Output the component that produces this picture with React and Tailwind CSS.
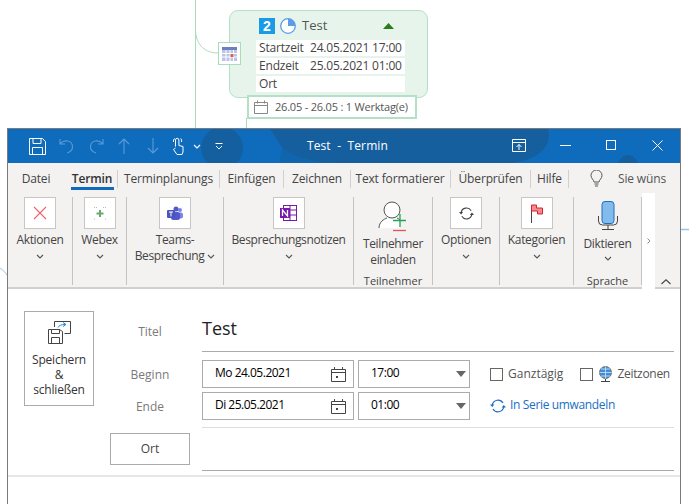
import React from "react";

const Chev = ({ className = "" }) => (
  <svg width="8" height="5" viewBox="0 0 8 5" className={className} fill="none" stroke="#555" strokeWidth="1.1"><path d="M1 1l3 3 3-3" /></svg>
);
const Sep = () => <div className="w-px h-[88px] mt-[7px] bg-[#c4c4c4] shrink-0" />;
const TabSep = () => <div className="w-px h-[18px] bg-[#d0d0d0] shrink-0" />;
const Box = ({ children }) => (
  <div className="w-[32px] h-[32px] bg-white border border-[#c6c6c6] flex items-center justify-center shrink-0">{children}</div>
);

function RibbonButton({ w, icon, lines, chevInline, chev = true }) {
  return (
    <div className={`${w} shrink-0 flex flex-col items-center pt-[7px] text-[12px] leading-[16px] text-[#444] tracking-[-0.35px]`}>
      <Box>{icon}</Box>
      <div className="mt-[3px] text-center whitespace-nowrap">{lines[0]}</div>
      {lines[1] && (
        <div className="text-center whitespace-nowrap flex items-center gap-[3px]">
          {lines[1]}
          {chevInline && <Chev />}
        </div>
      )}
      {chev && !chevInline && <Chev className="mt-[6px]" />}
    </div>
  );
}

const CalIcon = () => (
  <svg width="15" height="16" viewBox="0 0 15 16" fill="none" stroke="#444" strokeWidth="1"><path d="M.5 3.500h14v12H.5zM.5 6.500h14M3.500 1v3M11.500 1v3" /><rect x="5" y="10" width="2" height="2" fill="#444" stroke="none" /></svg>
);

const Arrow = () => (
  <svg width="10" height="6" viewBox="0 0 10 6"><path d="M0 0h10L5 6z" fill="#666" /></svg>
);

const Sync = ({ size, color }) => (
  <svg width={size} height={size} viewBox="0 0 16 16" fill="none" stroke={color} strokeWidth="1.2">
    <path d="M2.300 7A5.800 5.800 0 0 1 13 5" />
    <path d="M13.700 9A5.800 5.800 0 0 1 3 11" />
    <path d="M0 6.500h4.400L2.200 9zM16 9.500h-4.400L13.800 7z" fill={color} stroke="none" />
  </svg>
);

export default function App() {
  return (
    <div className="relative w-[689px] h-[504px] overflow-hidden bg-white text-[12px] text-[#444]" style={{ fontFamily: '"Open Sans","Noto Sans",sans-serif' }}>
      {/* mind-map canvas */}
      <svg className="absolute left-0 top-0" width="689" height="504" fill="none">
        <path d="M195.500 0V128M195.500 30C196 46 206 53 218 53M246.500 118V128" stroke="#a8dcbd" strokeWidth="1" />
        <path d="M680 229.500H689" stroke="#9dc3e6" strokeWidth="1.500" />
        <path d="M0 268C3 270 5 272 7 275" stroke="#9dc3e6" strokeWidth="1" />
      </svg>
      <div className="absolute left-[229px] top-[10px] w-[199px] h-[88px] rounded-[9px] bg-[#e6f4ec] border border-[#b5e0c8]">
        <div className="flex items-center h-[29px] pl-[29px] pt-[1px]">
          <div className="w-[16px] h-[16px] bg-[#1b9ae8] text-white text-[14px] font-bold leading-[16px] text-center" style={{ fontFamily: '"Liberation Sans",sans-serif' }}>2</div>
          <svg className="ml-[5px]" width="16" height="16" viewBox="0 0 16 16"><circle cx="8" cy="8" r="7.300" fill="#fff" stroke="#5b9bea" strokeWidth="1.300" /><path d="M8 8V.7A7.300 7.300 0 0 1 15.300 8z" fill="#5b9bea" /></svg>
          <span className="ml-[6px] text-[13px] text-[#555]">Test</span>
          <svg className="ml-[56px]" width="11" height="6" viewBox="0 0 11 6"><path d="M0 6L5.500 0 11 6z" fill="#2a7d1a" /></svg>
        </div>
        {[
          ["Startzeit", "24.05.2021 17:00"],
          ["Endzeit", "25.05.2021 01:00"],
          ["Ort", ""],
        ].map(([a, b]) => (
          <div key={a} className="ml-[26px] mb-[2px] w-[149px] h-[16px] bg-white flex text-[12px] leading-[16px] text-[#444] pl-[3px] whitespace-nowrap tracking-[-0.2px]">
            <span className="w-[51px]">{a}</span>
            <span>{b}</span>
          </div>
        ))}
      </div>
      <div className="absolute left-[218px] top-[42px] w-[23px] h-[23px] bg-white border border-[#a8dcbd] flex items-center justify-center">
        <svg width="15" height="14" viewBox="0 0 15 14"><rect width="15" height="14" fill="#b9c4e6" /><rect y="0" width="15" height="3" fill="#6e7fc0" /><path d="M0 6.500h15M0 10h15M4 3v11M8 3v11M11.500 3v11" stroke="#fff" strokeWidth="1" /><rect x="8.500" y="7" width="3" height="3" fill="#e06050" /></svg>
      </div>
      <div className="absolute left-[247px] top-[95px] w-[170px] h-[24px] bg-white border-2 border-[#b5e0c8] flex items-center pl-[5px] text-[11px] text-[#555] whitespace-nowrap">
        <svg width="14" height="14" viewBox="0 0 14 14" fill="none" stroke="#888"><path d="M.5 2.500h13v11H.5zM.5 5.500h13M3.500 .5v3M10.500 .5v3" /></svg>
        <span className="ml-[7px] tracking-[-0.2px]">26.05 - 26.05 : 1 Werktag(e)</span>
      </div>

      {/* Outlook window */}
      <div className="absolute left-[7px] top-[128px] w-[674px] h-[380px] border border-[#7a7a7a] bg-white">
        {/* title bar */}
        <div className="relative h-[34px] overflow-hidden flex items-center bg-[#0f6cbd] text-white">
          <svg className="absolute left-0 top-0" width="672" height="34">
            <circle cx="214" cy="19" r="21" fill="#145f9f" />
            <circle cx="296" cy="30" r="24" fill="#125f9f" opacity=".5" />
            <path d="M262 0H540C545 18 530 30 505 34H330C310 34 290 30 275 20z" fill="#165f9f" />
            <circle cx="620" cy="36" r="10" fill="#145f9f" />
          </svg>
          <svg className="relative ml-[21px]" width="17" height="17" viewBox="0 0 17 17" fill="none" stroke="#fff" strokeWidth="1"><path d="M.5.5h13l3 3v13H.5zM4 .5v5h8v-5M3.500 16.500v-7h10v7" /></svg>
          <svg className="relative ml-[13px]" width="16" height="16" viewBox="0 0 16 16" fill="none" stroke="#5a9bd6" strokeWidth="1.100"><path d="M1 1v5h5M1.500 5.500C5 1.500 13 2 13.500 8.500 13.800 12 11 14 8 15" /></svg>
          <svg className="relative ml-[13px]" width="16" height="16" viewBox="0 0 16 16" fill="none" stroke="#5a9bd6" strokeWidth="1.100"><path d="M15 1v5h-5M14.500 5.500C11 1.500 3 2 2.500 8.500 2.200 12 5 14 8 15" /></svg>
          <svg className="relative ml-[14px]" width="12" height="16" viewBox="0 0 12 16" fill="none" stroke="#5a9bd6" strokeWidth="1.100"><path d="M6 16V1M1 6l5-5 5 5" /></svg>
          <svg className="relative ml-[17px]" width="12" height="16" viewBox="0 0 12 16" fill="none" stroke="#5a9bd6" strokeWidth="1.100"><path d="M6 0v15M1 10l5 5 5-5" /></svg>
          <svg className="relative ml-[13px]" width="13" height="18" viewBox="0 0 13 18" fill="none" stroke="#fff" strokeWidth="1"><path d="M3.500 9.500V3a1.700 1.700 0 0 1 3.400 0v5.500l4.100 1V15l-1 2.500H5L1.500 12.500 3.500 11M1.500 5a4 4 0 0 1 1-3.500M8.800 1.500A4 4 0 0 1 9.500 5" /></svg>
          <svg className="relative ml-[8px]" width="8" height="5" viewBox="0 0 8 5" fill="none" stroke="#fff" strokeWidth="1.100"><path d="M1 1l3 3 3-3" /></svg>
          <svg className="relative ml-[14px]" width="8" height="7" viewBox="0 0 8 7" fill="none" stroke="#fff"><path d="M.5 .5h7M1 3l3 3 3-3" /></svg>
          <span className="absolute left-[299px] top-[9px] text-[12px] leading-[16px] whitespace-pre tracking-[0.1px]">Test  -  Termin</span>
          <svg className="absolute left-[504px] top-[10px]" width="14" height="13" viewBox="0 0 14 13" fill="none" stroke="#fff"><path d="M.5.500h13v12H.5zM.5 3.500h13M7 11V5.500M4.500 8L7 5.500 9.500 8" /></svg>
          <div className="absolute left-[552px] top-[16px] w-[11px] h-px bg-white" />
          <div className="absolute left-[598px] top-[11px] w-[10px] h-[10px] border border-white" />
          <svg className="absolute left-[644px] top-[11px]" width="11" height="11" viewBox="0 0 11 11" stroke="#fff" strokeWidth="1"><path d="M.5.500l10 10M10.500.500l-10 10" /></svg>
        </div>

        {/* tabs */}
        <div className="relative h-[27px] pt-[4px] bg-[#f3f2f1] flex items-center text-[12px] text-[#444] whitespace-nowrap tracking-[-0.15px]">
          <span className="ml-[13px] w-[30px] text-center">Datei</span>
          <span className="ml-[20px] w-[42px] text-center font-semibold text-[#333]">Termin</span>
          <span className="ml-[4px]"><TabSep /></span>
          <span className="ml-[4px] w-[93px] text-center">Terminplanungs</span>
          <span className="ml-[4px]"><TabSep /></span>
          <span className="ml-[6px] w-[51px] text-center">Einfügen</span>
          <span className="ml-[6px]"><TabSep /></span>
          <span className="ml-[7px] w-[52px] text-center">Zeichnen</span>
          <span className="ml-[7px]"><TabSep /></span>
          <span className="ml-[3px] w-[92px] text-center">Text formatierer</span>
          <span className="ml-[4px]"><TabSep /></span>
          <span className="ml-[6px] w-[67px] text-center">Überprüfen</span>
          <span className="ml-[6px]"><TabSep /></span>
          <span className="ml-[5px] w-[27px] text-center">Hilfe</span>
          <span className="ml-[5px]"><TabSep /></span>
          <svg className="ml-[21px]" width="13" height="17" viewBox="0 0 13 17" fill="none" stroke="#555"><path d="M4 12c0-2-3-3.500-3-6.500a5.500 5.500 0 0 1 11 0C12 8.500 9 10 9 12zM4.500 14h4M5 16h3" /></svg>
          <span className="ml-[15px] text-[#555]">Sie wüns</span>
          <div className="absolute left-[63px] top-[24px] w-[43px] h-[3px] bg-[#0f6cbd]" />
        </div>

        {/* ribbon */}
        <div className="relative h-[99px] bg-[#f3f2f1] border-b-2 border-[#d2d0ce] flex">
          <RibbonButton w="w-[64px]" lines={["Aktionen"]} icon={<svg width="14" height="14" viewBox="0 0 14 14" stroke="#f0616b" strokeWidth="1.100"><path d="M1 1l12 12M13 1L1 13" /></svg>} />
          <Sep />
          <RibbonButton w="w-[53px]" lines={["Webex"]} icon={<svg width="14" height="14" viewBox="0 0 14 14"><path d="M7 4v7M3.500 7.500h7" stroke="#6aa86f" strokeWidth="2" /><path d="M1 1l1 1M4 1L3 2M10 1l1 1M13 1l-1 1M1 13h1M12 13h1" stroke="#bbb" strokeWidth="1" /></svg>} />
          <Sep />
          <RibbonButton w="w-[96px]" chevInline lines={["Teams-", "Besprechung"]} icon={<svg width="16" height="15" viewBox="0 0 16 15"><circle cx="13" cy="4" r="2" fill="#7b83eb" /><circle cx="9" cy="3" r="2.500" fill="#5059c9" /><rect x="10" y="6.500" width="6" height="6" rx="2" fill="#7b83eb" /><rect x="4" y="6" width="9" height="8" rx="2.500" fill="#5059c9" /><rect x="0" y="4" width="8" height="8" rx="1" fill="#4b53bc" /><path d="M2 6h4M4 6v4.500" stroke="#fff" strokeWidth="1" /></svg>} />
          <Sep />
          <RibbonButton w="w-[129px]" lines={["Besprechungsnotizen"]} icon={<svg width="17" height="16" viewBox="0 0 17 16"><rect x="3.500" y=".5" width="13" height="15" fill="#fff" stroke="#7719aa" /><path d="M10 .5v15M10 5h6.500M10 10h6.500" stroke="#7719aa" /><rect x="0" y="3" width="10" height="10" fill="#7719aa" /><path d="M2.500 11V5l5 6V5" fill="none" stroke="#fff" strokeWidth="1.300" /></svg>} />
          <Sep />
          <div className="w-[78px] shrink-0 flex flex-col items-center pt-[11px] leading-[16px] whitespace-nowrap tracking-[-0.35px]">
            <svg className="shrink-0" width="30" height="31" viewBox="0 0 30 31" fill="none">
              <circle cx="14" cy="9" r="8" fill="#fff" stroke="#555" />
              <path d="M1 27c0-6 5-9 8-10 3 1.500 7 1.500 10 0 1 .5 2 1 3 2v8z" fill="#fff" />
              <path d="M1 27c0-6 5-9 8-10M19 17c1 .5 2 1 3 2" stroke="#555" />
              <path d="M22 13v13M15 19.500h13" stroke="#22a355" strokeWidth="1.300" />
              <path d="M15 29.500h13" stroke="#e8505b" strokeWidth="1.300" />
            </svg>
            <span className="mt-[4px] shrink-0">Teilnehmer</span>
            <span className="shrink-0">einladen</span>
            <span className="mt-[5px] shrink-0 text-[11px] tracking-normal">Teilnehmer</span>
          </div>
          <Sep />
          <RibbonButton w="w-[66px]" lines={["Optionen"]} icon={<Sync size={15} color="#444" />} />
          <Sep />
          <RibbonButton w="w-[73px]" lines={["Kategorien"]} icon={<svg width="12" height="19" viewBox="0 0 12 19"><path d="M.5 6v13" stroke="#444" /><path d="M.5 1h5v3h6v6h-5V7H.5z" fill="#f48a90" stroke="#d8232f" /></svg>} />
          <Sep />
          <div className="w-[67px] shrink-0 flex flex-col items-center pt-[11px] leading-[16px] whitespace-nowrap tracking-[-0.35px]">
            <svg className="shrink-0" width="20" height="29" viewBox="0 0 20 29" fill="none">
              <rect x="4" y=".5" width="12" height="22" rx="3" fill="#83bbea" stroke="#1a6fc4" />
              <path d="M.5 15v5a4 4 0 0 0 4 4h11a4 4 0 0 0 4-4v-5M10 24v4M4 28.500h12" stroke="#444" />
            </svg>
            <span className="mt-[6px] shrink-0">Diktieren</span>
            <Chev className="mt-[4px] shrink-0" />
            <span className="mt-[12px] shrink-0 text-[11px] tracking-normal">Sprache</span>
          </div>
          <Sep />
          <div className="w-[13px] h-[96px] mt-[3px] bg-white flex items-center justify-center shrink-0">
            <svg width="4" height="6" viewBox="0 0 4 6" fill="none" stroke="#888"><path d="M.5.500L3 3 .5 5.500" /></svg>
          </div>
          <svg className="ml-[6px] mt-[89px]" width="10" height="6" viewBox="0 0 10 6" fill="none" stroke="#444" strokeWidth="1.100"><path d="M.5 5L5 .8 9.500 5" /></svg>
        </div>

        {/* form */}
        <div className="h-[186px] flex items-start pl-[16px] pt-[22px]">
          <div className="w-[70px] h-[95px] border border-[#ababab] flex flex-col items-center pt-[9px] leading-[15px] text-[#333] shrink-0 tracking-[-0.2px]">
            <svg width="23" height="23" viewBox="0 0 23 23" fill="none" stroke="#444">
              <path d="M6.500 6V.5h16v12h-6" />
              <path d="M.5 8.500h11l3 2v12H.5zM3.500 8.500v4h8v-4M3.500 22.500v-6h8v6" fill="#fff" />
              <path d="M10 6.500c1-2 3-3 7-3M15 1.500l3 2-3 2" stroke="#2b88d8" />
            </svg>
            <span className="mt-[8px]">Speichern</span>
            <span>&amp;</span>
            <span>schließen</span>
          </div>
          <div className="w-[80px] shrink-0 text-[#7a7a7a] ml-[16px]">
            <div className="h-[42px] flex items-center justify-center">Titel</div>
            <div className="h-[32px] mt-[6px] flex items-center justify-center">Beginn</div>
            <div className="h-[32px] flex items-center justify-center">Ende</div>
            <div className="mt-[10px] w-[80px] h-[32px] border border-[#ababab] flex items-center justify-center text-[#444]">Ort</div>
          </div>
          <div className="w-[472px] ml-[12px] shrink-0">
            <div className="h-[41px] border-b border-[#ababab] text-[18px] leading-[34px] text-[#222]">Test</div>
            <div className="mt-[8px] flex gap-[4px] text-black tracking-[-0.5px]">
              <div className="w-[152px] h-[28px] border border-[#ababab] flex items-center justify-between pl-[12px] pr-[7px] pb-[2px]">Mo 24.05.2021<span className="mt-[2px]"><CalIcon /></span></div>
              <div className="w-[112px] h-[28px] border border-[#ababab] flex items-center justify-between pl-[12px] pr-[3px] pb-[2px]">17:00<span className="mt-[2px]"><Arrow /></span></div>
              <div className="ml-[16px] flex items-center text-[#555] tracking-normal">
                <span className="w-[13px] h-[13px] border border-[#666] bg-white" />
                <span className="ml-[5px]">Ganztägig</span>
                <span className="ml-[17px] w-[13px] h-[13px] border border-[#666] bg-white" />
                <svg className="ml-[6px]" width="13" height="16" viewBox="0 0 13 16" fill="none"><circle cx="6.500" cy="6.500" r="6" fill="#3f8fd8" stroke="#777" /><path d="M.5 6.500h12M6.500 .5v12M2 3h9M2 10h9" stroke="#cfe6f8" strokeWidth=".8" /><path d="M6.500 13v2M2 15.500h9" stroke="#444" /></svg>
                <span className="ml-[5px] tracking-[-0.3px]">Zeitzonen</span>
              </div>
            </div>
            <div className="mt-[4px] flex gap-[4px] text-black tracking-[-0.5px]">
              <div className="w-[152px] h-[28px] border border-[#ababab] flex items-center justify-between pl-[12px] pr-[7px] pb-[2px]">Di 25.05.2021<span className="mt-[2px]"><CalIcon /></span></div>
              <div className="w-[112px] h-[28px] border border-[#ababab] flex items-center justify-between pl-[12px] pr-[3px] pb-[2px]">01:00<span className="mt-[2px]"><Arrow /></span></div>
              <div className="ml-[16px] flex items-center text-[#1a6fc4] tracking-[-0.35px]">
                <Sync size={16} color="#1a6fc4" />
                <span className="ml-[4px] mb-[2px]">In Serie umwandeln</span>
              </div>
            </div>
            <div className="mt-[7px] h-[43px] border-t border-[#dedede]" />
            <div className="h-px bg-[#ababab]" />
          </div>
        </div>
        <div className="h-[2px] bg-[#e6e6e6]" />
      </div>
    </div>
  );
}
